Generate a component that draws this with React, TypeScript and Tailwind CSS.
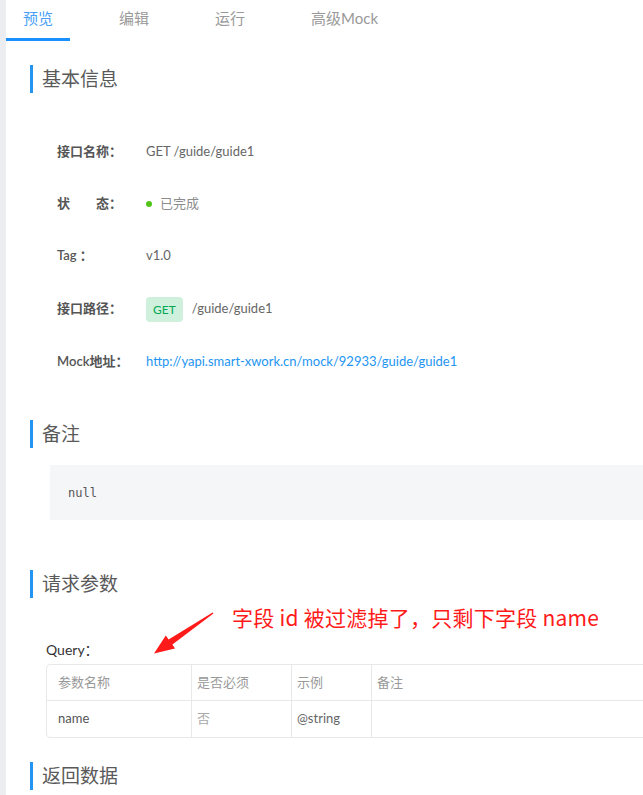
import React from "react";

const font = "font-['Lato','Noto_Sans_CJK_SC',sans-serif]";

type SectionTitleProps = {
  title: string;
};

const SectionTitle: React.FC<SectionTitleProps> = ({ title }) => {
  return (
    <div className="h-[28px] border-l-[3px] border-[#2395f1] pl-[9px] text-[19px] leading-[28px] text-[#595959]">
      {title}
    </div>
  );
};

type InfoRowProps = {
  label: string;
  tall?: boolean;
  children: React.ReactNode;
};

const InfoRow: React.FC<InfoRowProps> = ({ label, tall, children }) => {
  return (
    <div className={`flex items-center ${tall ? "h-[54px]" : "h-[52px]"}`}>
      <div className="w-[89px] shrink-0 whitespace-pre text-[13px] font-semibold text-[#555]">
        {label}
      </div>
      <div className="flex items-center text-[13px] text-[#666]">{children}</div>
    </div>
  );
};

const tabs = ["预览", "编辑", "运行", "高级Mock"];

export default function App() {
  return (
    <div className={`${font} relative flex h-[795px] w-[643px] overflow-hidden bg-white`}>
      <div className="w-[6px] shrink-0 bg-[#ebedf0]" />

      <div className="w-[700px] shrink-0">
        {/* tabs */}
        <div className="flex h-[41px]">
          {tabs.map((t, i) => (
            <div
              key={t}
              className={`mr-8 h-[41px] px-[17px] pt-[8px] text-[15px] leading-[20px] ${
                i === 0
                  ? "border-b-[3px] border-[#1890ff] text-[#4a9ff5]"
                  : "text-[#999]"
              }`}
            >
              {t}
            </div>
          ))}
        </div>

        <div className="pl-[24px]">
          <div className="mt-[24px]">
            <SectionTitle title="基本信息" />
          </div>

          <div className="mt-[33px] pl-[27px]">
            <InfoRow label="接口名称：">GET /guide/guide1</InfoRow>
            <InfoRow label="状　　态：">
              <span className="mr-[8px] inline-block h-[6px] w-[6px] rounded-full bg-[#52c41a]" />
              <span className="text-[#8c8c8c]">已完成</span>
            </InfoRow>
            <InfoRow label="Tag ：">v1.0</InfoRow>
            <InfoRow label="接口路径：" tall>
              <span className="mr-[9px] rounded-[4px] bg-[#cff0dc] px-[7px] py-[4px] text-[12px] leading-[17px] text-[#00a854]">
                GET
              </span>
              /guide/guide1
            </InfoRow>
            <InfoRow label="Mock地址：">
              <span className="text-[#2395f1]">
                http://yapi.smart-xwork.cn/mock/92933/guide/guide1
              </span>
            </InfoRow>
          </div>

          <div className="mt-[32px]">
            <SectionTitle title="备注" />
          </div>
          <div className="ml-[20px] mt-[17px] flex h-[55px] items-center bg-[#f5f6f8] pl-[18px] font-['DejaVu_Sans_Mono',monospace] text-[12px] text-[#555]">
            null
          </div>

          <div className="mt-[50px]">
            <SectionTitle title="请求参数" />
          </div>

          <div className="mt-[43px] pl-[16px] text-[14px] leading-[18px] text-[#333]">
            Query：
          </div>

          <div className="ml-[16px] mt-[5px] rounded-[4px] border border-[#e8e8e8] text-[13px]">
            <div className="flex h-[36px] items-center border-b border-[#e8e8e8] text-[#999]">
              <div className="flex h-full w-[145px] items-center border-r border-[#e8e8e8] pl-[11px]">参数名称</div>
              <div className="flex h-full w-[100px] items-center border-r border-[#e8e8e8] pl-[5px]">是否必须</div>
              <div className="flex h-full w-[80px] items-center border-r border-[#e8e8e8] pl-[5px]">示例</div>
              <div className="flex h-full flex-1 items-center pl-[5px]">备注</div>
            </div>
            <div className="flex h-[36px] items-center">
              <div className="flex h-full w-[145px] items-center border-r border-[#e8e8e8] pl-[11px] text-[#555]">name</div>
              <div className="flex h-full w-[100px] items-center border-r border-[#e8e8e8] pl-[5px] text-[#aaa]">否</div>
              <div className="flex h-full w-[80px] items-center border-r border-[#e8e8e8] pl-[5px] text-[#666]">@string</div>
              <div className="flex-1" />
            </div>
          </div>

          <div className="mt-[24px]">
            <SectionTitle title="返回数据" />
          </div>
        </div>
      </div>

      {/* screenshot annotation */}
      <svg
        className="absolute left-[140px] top-[600px]"
        width="90"
        height="60"
        viewBox="140 600 90 60"
      >
        <polygon
          points="213.4,613.6 172.4,644.6 175,648.6 154,653.5 165.8,635.4 168.6,639.4 212.6,612.4"
          fill="#ff1a1a"
        />
      </svg>
      <div className="absolute left-[232px] top-[603px] font-['Noto_Sans_CJK_SC',sans-serif] text-[21px] leading-[28px] tracking-[0.25px] text-[#ff1a1a]">
        字段 id 被过滤掉了，只剩下字段 name
      </div>
    </div>
  );
}
